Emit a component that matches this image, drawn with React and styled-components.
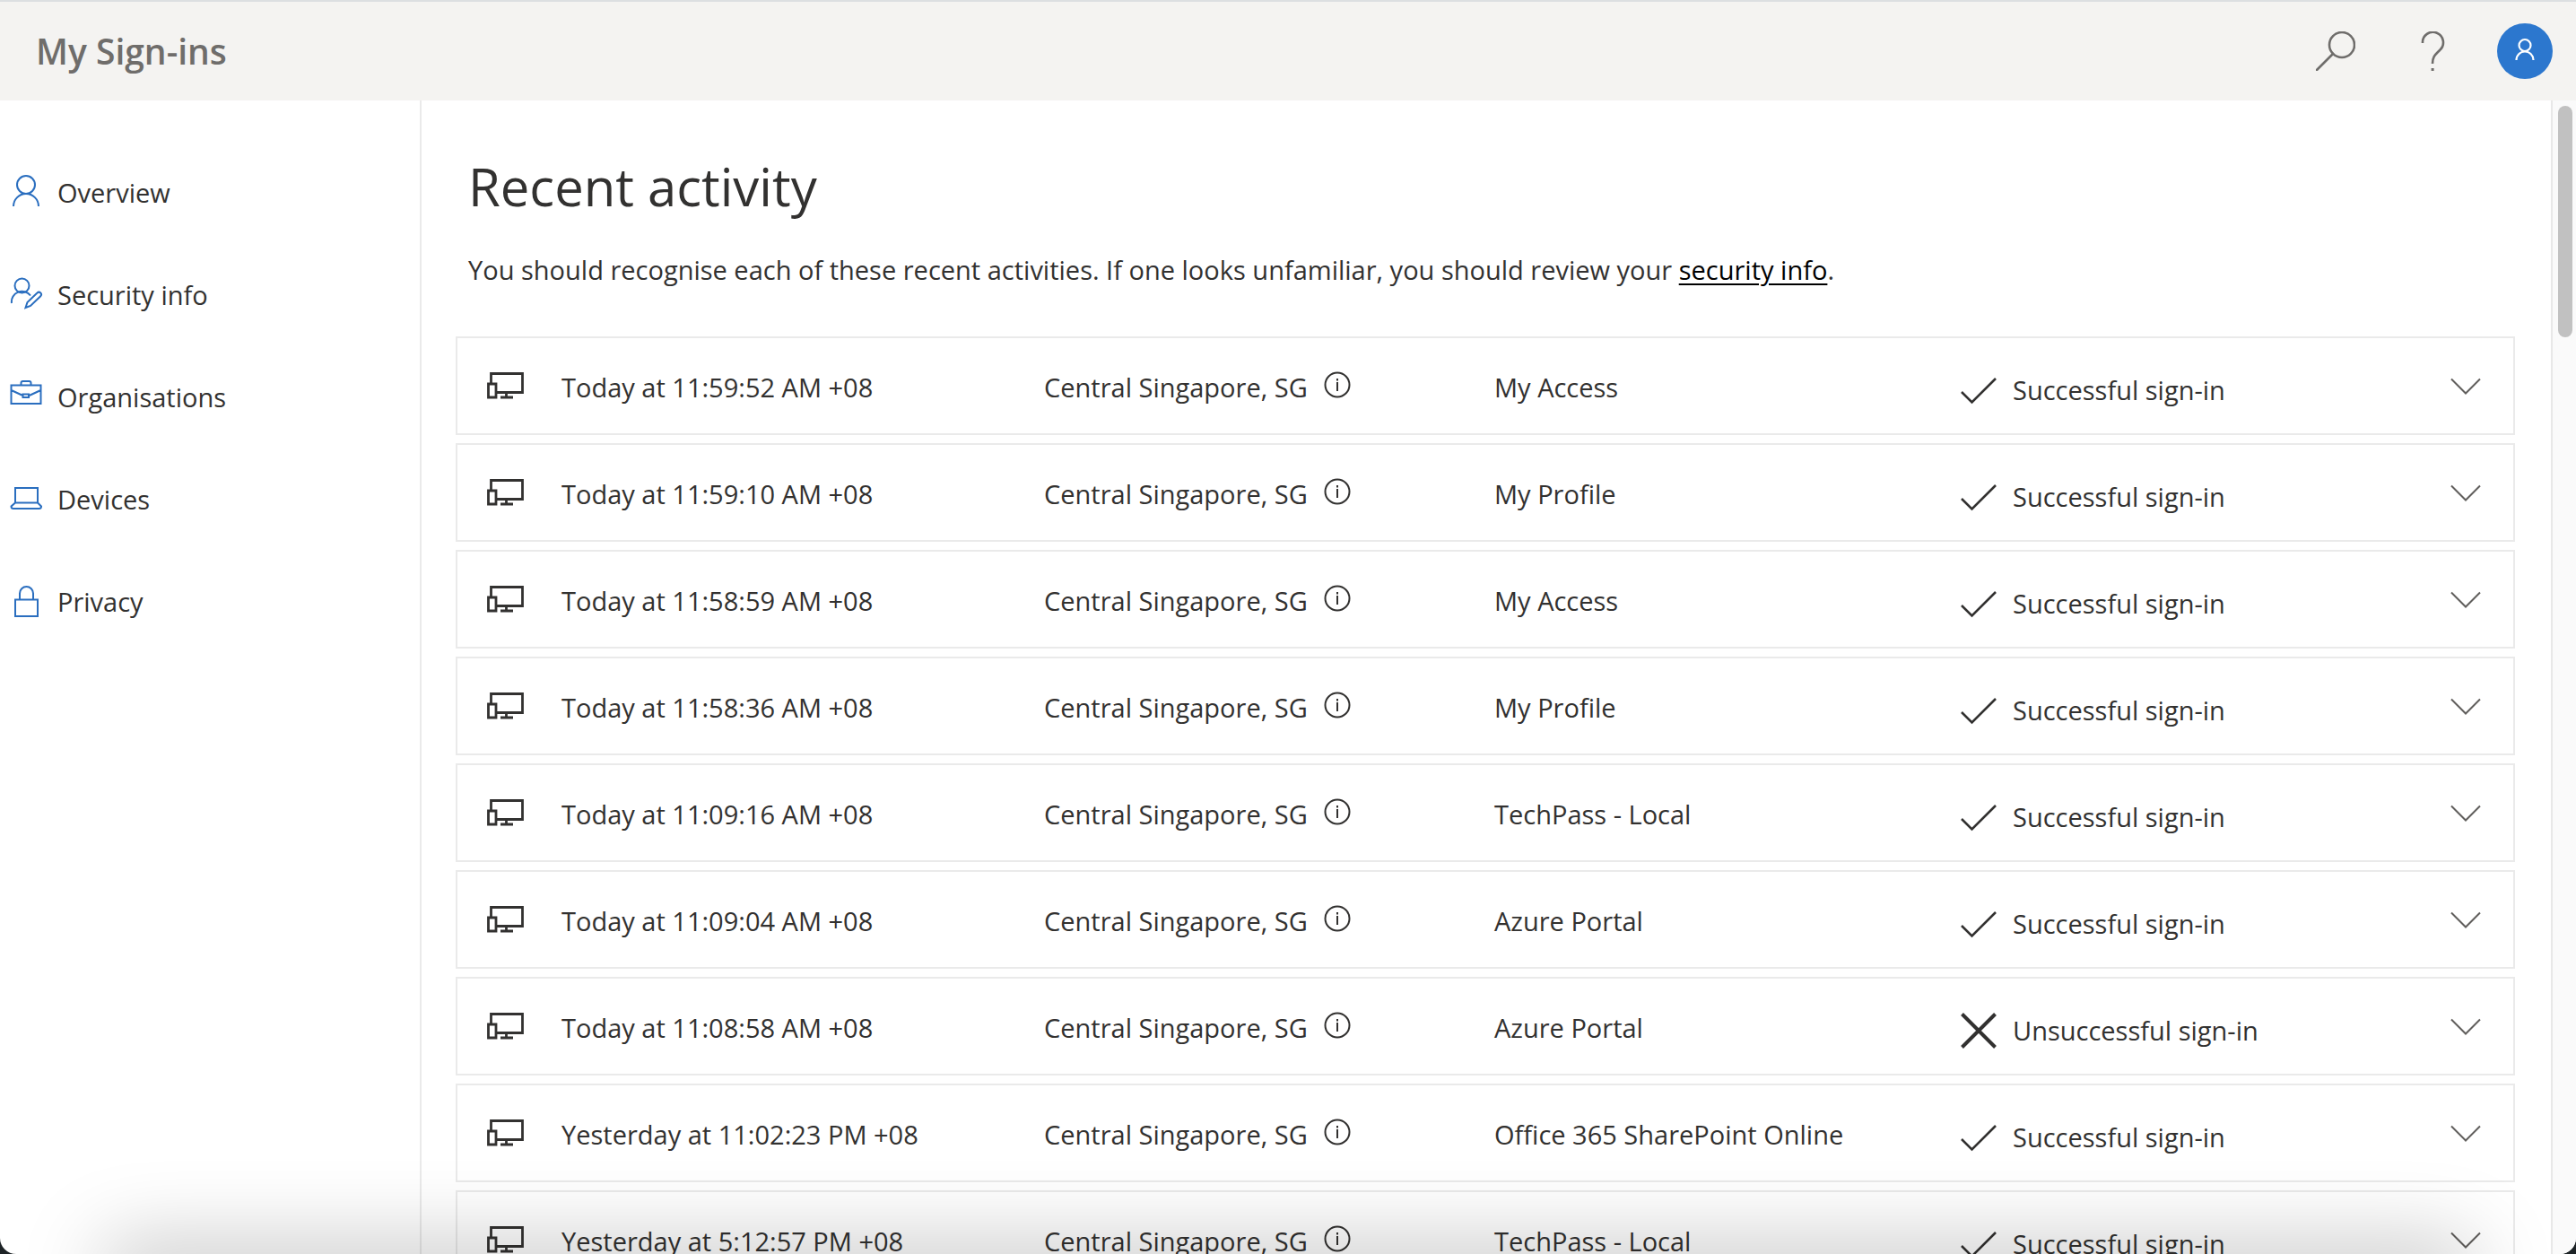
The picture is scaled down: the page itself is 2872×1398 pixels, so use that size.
import React from "react";
import styled, { createGlobalStyle } from "styled-components";

const GlobalStyle = createGlobalStyle`
  *, *::before, *::after { box-sizing: border-box; }
  html, body, #root { height: 100%; }
  body {
    margin: 0;
    overflow: hidden;
    background: #1d2326;
    color: #323130;
    font-family: "Open Sans", "Noto Sans", sans-serif;
    font-size: 29px;
    line-height: 40px;
  }
`;

const Page = styled.div`
  position: relative;
  display: flex;
  flex-direction: column;
  height: 100%;
  overflow: hidden;
  border-radius: 0 0 18px 18px;
  background: #fff;
`;

const Header = styled.header`
  display: flex;
  flex: none;
  align-items: center;
  justify-content: space-between;
  height: 112px;
  padding: 0 26px 0 40px;
  border-top: 2px solid #dcdfe1;
  background: #f4f3f1;
`;

const Brand = styled.a`
  color: #6f6d6b;
  font-size: 39px;
  font-weight: 600;
  line-height: 48px;
  text-decoration: none;
`;

const Actions = styled.div`
  display: flex;
  align-items: center;
  gap: 18px;
`;

const IconButton = styled.button`
  display: flex;
  align-items: center;
  justify-content: center;
  width: ${(p) => p.$width}px;
  height: 62px;
  margin: 0;
  padding: 0;
  border: 0;
  border-radius: ${(p) => (p.$round ? "50%" : "0")};
  background: ${(p) => (p.$round ? "#2c77ce" : "transparent")};
  color: ${(p) => (p.$round ? "#fff" : "#6f6d6b")};
`;

const Body = styled.div`
  display: flex;
  flex: 1;
  min-height: 0;
`;

const Sidebar = styled.nav`
  flex: none;
  width: 470px;
  padding: 46px 10px;
  border-right: 2px solid #eaeaea;
`;

const NavLink = styled.a`
  display: flex;
  align-items: center;
  gap: 16px;
  height: 114px;
  color: #323130;
  text-decoration: none;

  svg { flex: none; margin-bottom: 2px; color: #2a6ebf; }
`;

const Main = styled.main`
  flex: 1;
  min-width: 0;
  overflow: hidden;
  padding: 54px 40px 0 38px;
`;

const Intro = styled.div`
  padding: 0 14px;
`;

const Title = styled.h1`
  margin: 0;
  font-size: 58px;
  font-weight: 400;
  line-height: 84px;
`;

const Lead = styled.p`
  margin: 31px 0 54px;

  a { color: #000; text-underline-offset: 4px; text-decoration-thickness: 2px; }
`;

const List = styled.ul`
  display: flex;
  flex-direction: column;
  gap: 9px;
  margin: 0;
  padding: 0;
  list-style: none;
`;

const Row = styled.li`
  display: grid;
  grid-template-columns: 84px 538fr 502fr 520fr 546fr 34px;
  align-items: center;
  height: 110px;
  padding: 4px 36px 0 32px;
  border: 2px solid #eaeaea;
`;

const Cell = styled.div`
  display: flex;
  align-items: center;
  gap: ${(p) => p.$gap || 0}px;
  padding-top: ${(p) => p.$drop || 0}px;
  white-space: nowrap;
`;

const BareButton = styled.button`
  display: flex;
  padding: 0 0 ${(p) => p.$lift || 0}px;
  border: 0;
  background: none;
  color: ${(p) => p.$color || "#323130"};
`;

const Track = styled.div`
  flex: none;
  width: 28px;
  padding: 6px 4px 0 6px;
  border-left: 2px solid #e8e8e8;
  background: #fafafa;
`;

const Thumb = styled.div`
  height: 258px;
  border-radius: 8px;
  background: #c1c1c1;
`;

const Shade = styled.div`
  position: absolute;
  right: 120px;
  bottom: -40px;
  left: 120px;
  height: 40px;
  border-radius: 20px;
  box-shadow: 0 0 90px 10px rgba(0, 0, 0, 0.26);
  pointer-events: none;
`;

const Svg = ({ w = 36, h = 36, sw = 2, children }) => (
  <svg width={w} height={h} viewBox={`0 0 ${w} ${h}`} fill="none" stroke="currentColor" strokeWidth={sw} aria-hidden="true">
    {children}
  </svg>
);

const icons = {
  overview: (
    <>
      <circle cx="19" cy="11" r="10" />
      <path d="M5 35 A14 14 0 0 1 33 35" />
    </>
  ),
  security: (
    <>
      <circle cx="14.5" cy="9.5" r="8" />
      <path d="M3 29 A11.7 11.7 0 0 1 24 20.5 M18.5 34 L20.5 28 L31.5 17.5 A2.6 2.6 0 0 1 35.2 21.2 L24 32 Z" />
    </>
  ),
  organisations: (
    <path d="M2.5 6.5 H35.5 V27 H2.5 Z M13.5 6 V4 Q13.5 2 15.5 2 H22.5 Q24.5 2 24.5 4 V6 M2.5 12 L15.5 18 M35.5 12 L22.5 18 M15.5 16.5 H22 V20 H15.5 Z" />
  ),
  devices: <path d="M7 7 H32 V23.5 H7 Z M7 23.5 L2.5 27.5 Q2.5 30 5 30 H33.5 Q36 30 36 27.5 L32 23.5" />,
  privacy: <path d="M7 17.5 H32 V36 H7 Z M12 17.5 V10.5 A7.5 7.5 0 0 1 27 10.5 V17.5" />,
};

const nav = [
  ["Overview", "overview"],
  ["Security info", "security"],
  ["Organisations", "organisations"],
  ["Devices", "devices"],
  ["Privacy", "privacy"],
];

const entries = [
  ["Today at 11:59:52 AM +08", "My Access", true],
  ["Today at 11:59:10 AM +08", "My Profile", true],
  ["Today at 11:58:59 AM +08", "My Access", true],
  ["Today at 11:58:36 AM +08", "My Profile", true],
  ["Today at 11:09:16 AM +08", "TechPass - Local", true],
  ["Today at 11:09:04 AM +08", "Azure Portal", true],
  ["Today at 11:08:58 AM +08", "Azure Portal", false],
  ["Yesterday at 11:02:23 PM +08", "Office 365 SharePoint Online", true],
  ["Yesterday at 5:12:57 PM +08", "TechPass - Local", true],
];

const SignInRow = ({ time, app, ok }) => (
  <Row>
    <Cell>
      <Svg w={44} h={36} sw={2.8}>
        <path d="M5.5 13 V2.5 H40.5 V23.5 H12 M2.5 14 H11 V29 H2.5 Z M22.5 24 V28 M16 29 H30" />
      </Svg>
    </Cell>
    <Cell>{time}</Cell>
    <Cell $gap={18}>
      Central Singapore, SG
      <BareButton type="button" aria-label="Location details" $lift={6}>
        <Svg w={30} h={30}>
          <circle cx="15" cy="15" r="13.5" />
          <path d="M15 12 V22 M15 8 V10.5" />
        </Svg>
      </BareButton>
    </Cell>
    <Cell>{app}</Cell>
    <Cell $gap={18} $drop={6}>
      <Svg w={40} h={40} sw={ok ? 2.6 : 4}>
        {ok ? <path d="M1 22 L12.5 33.5 L39 7" /> : <path d="M1.5 1.5 L38.5 38.5 M38.5 1.5 L1.5 38.5" />}
      </Svg>
      {ok ? "Successful sign-in" : "Unsuccessful sign-in"}
    </Cell>
    <BareButton type="button" aria-label="Show details" $color="#605e5c" $lift={2}>
      <Svg w={34} h={20}>
        <path d="M1 1.5 L17 17.5 L33 1.5" />
      </Svg>
    </BareButton>
  </Row>
);

export default function App() {
  return (
    <>
      <GlobalStyle />
      <Page>
        <Header>
          <Brand href="#">My Sign-ins</Brand>
          <Actions>
            <IconButton type="button" aria-label="Search" $width={72}>
              <Svg w={44} h={44} sw={2.6}>
                <circle cx="29" cy="15" r="14" />
                <path d="M19 25 L1 43" strokeLinecap="round" />
              </Svg>
            </IconButton>
            <IconButton type="button" aria-label="Help" $width={108}>
              <Svg w={28} h={44} sw={2.6}>
                <path d="M3 13 A11.5 11.5 0 1 1 22 21 C17 26 14 28 14 36" />
                <path d="M12.6 42.5 H15.6" strokeWidth="3" />
              </Svg>
            </IconButton>
            <IconButton type="button" aria-label="Account" $width={62} $round>
              <Svg w={22} h={30} sw={2.2}>
                <circle cx="11" cy="8.5" r="6.5" />
                <path d="M1.5 25 A9.5 9.5 0 0 1 20.5 25" />
              </Svg>
            </IconButton>
          </Actions>
        </Header>
        <Body>
          <Sidebar>
            {nav.map(([label, icon]) => (
              <NavLink href="#" key={label}>
                <Svg w={38} h={38}>{icons[icon]}</Svg>
                {label}
              </NavLink>
            ))}
          </Sidebar>
          <Main>
            <Intro>
              <Title>Recent activity</Title>
              <Lead>
                You should recognise each of these recent activities. If one looks unfamiliar, you should review your{" "}
                <a href="#">security info</a>.
              </Lead>
            </Intro>
            <List>
              {entries.map(([time, app, ok]) => (
                <SignInRow key={time} time={time} app={app} ok={ok} />
              ))}
            </List>
          </Main>
          <Track>
            <Thumb />
          </Track>
        </Body>
        <Shade />
      </Page>
    </>
  );
}
